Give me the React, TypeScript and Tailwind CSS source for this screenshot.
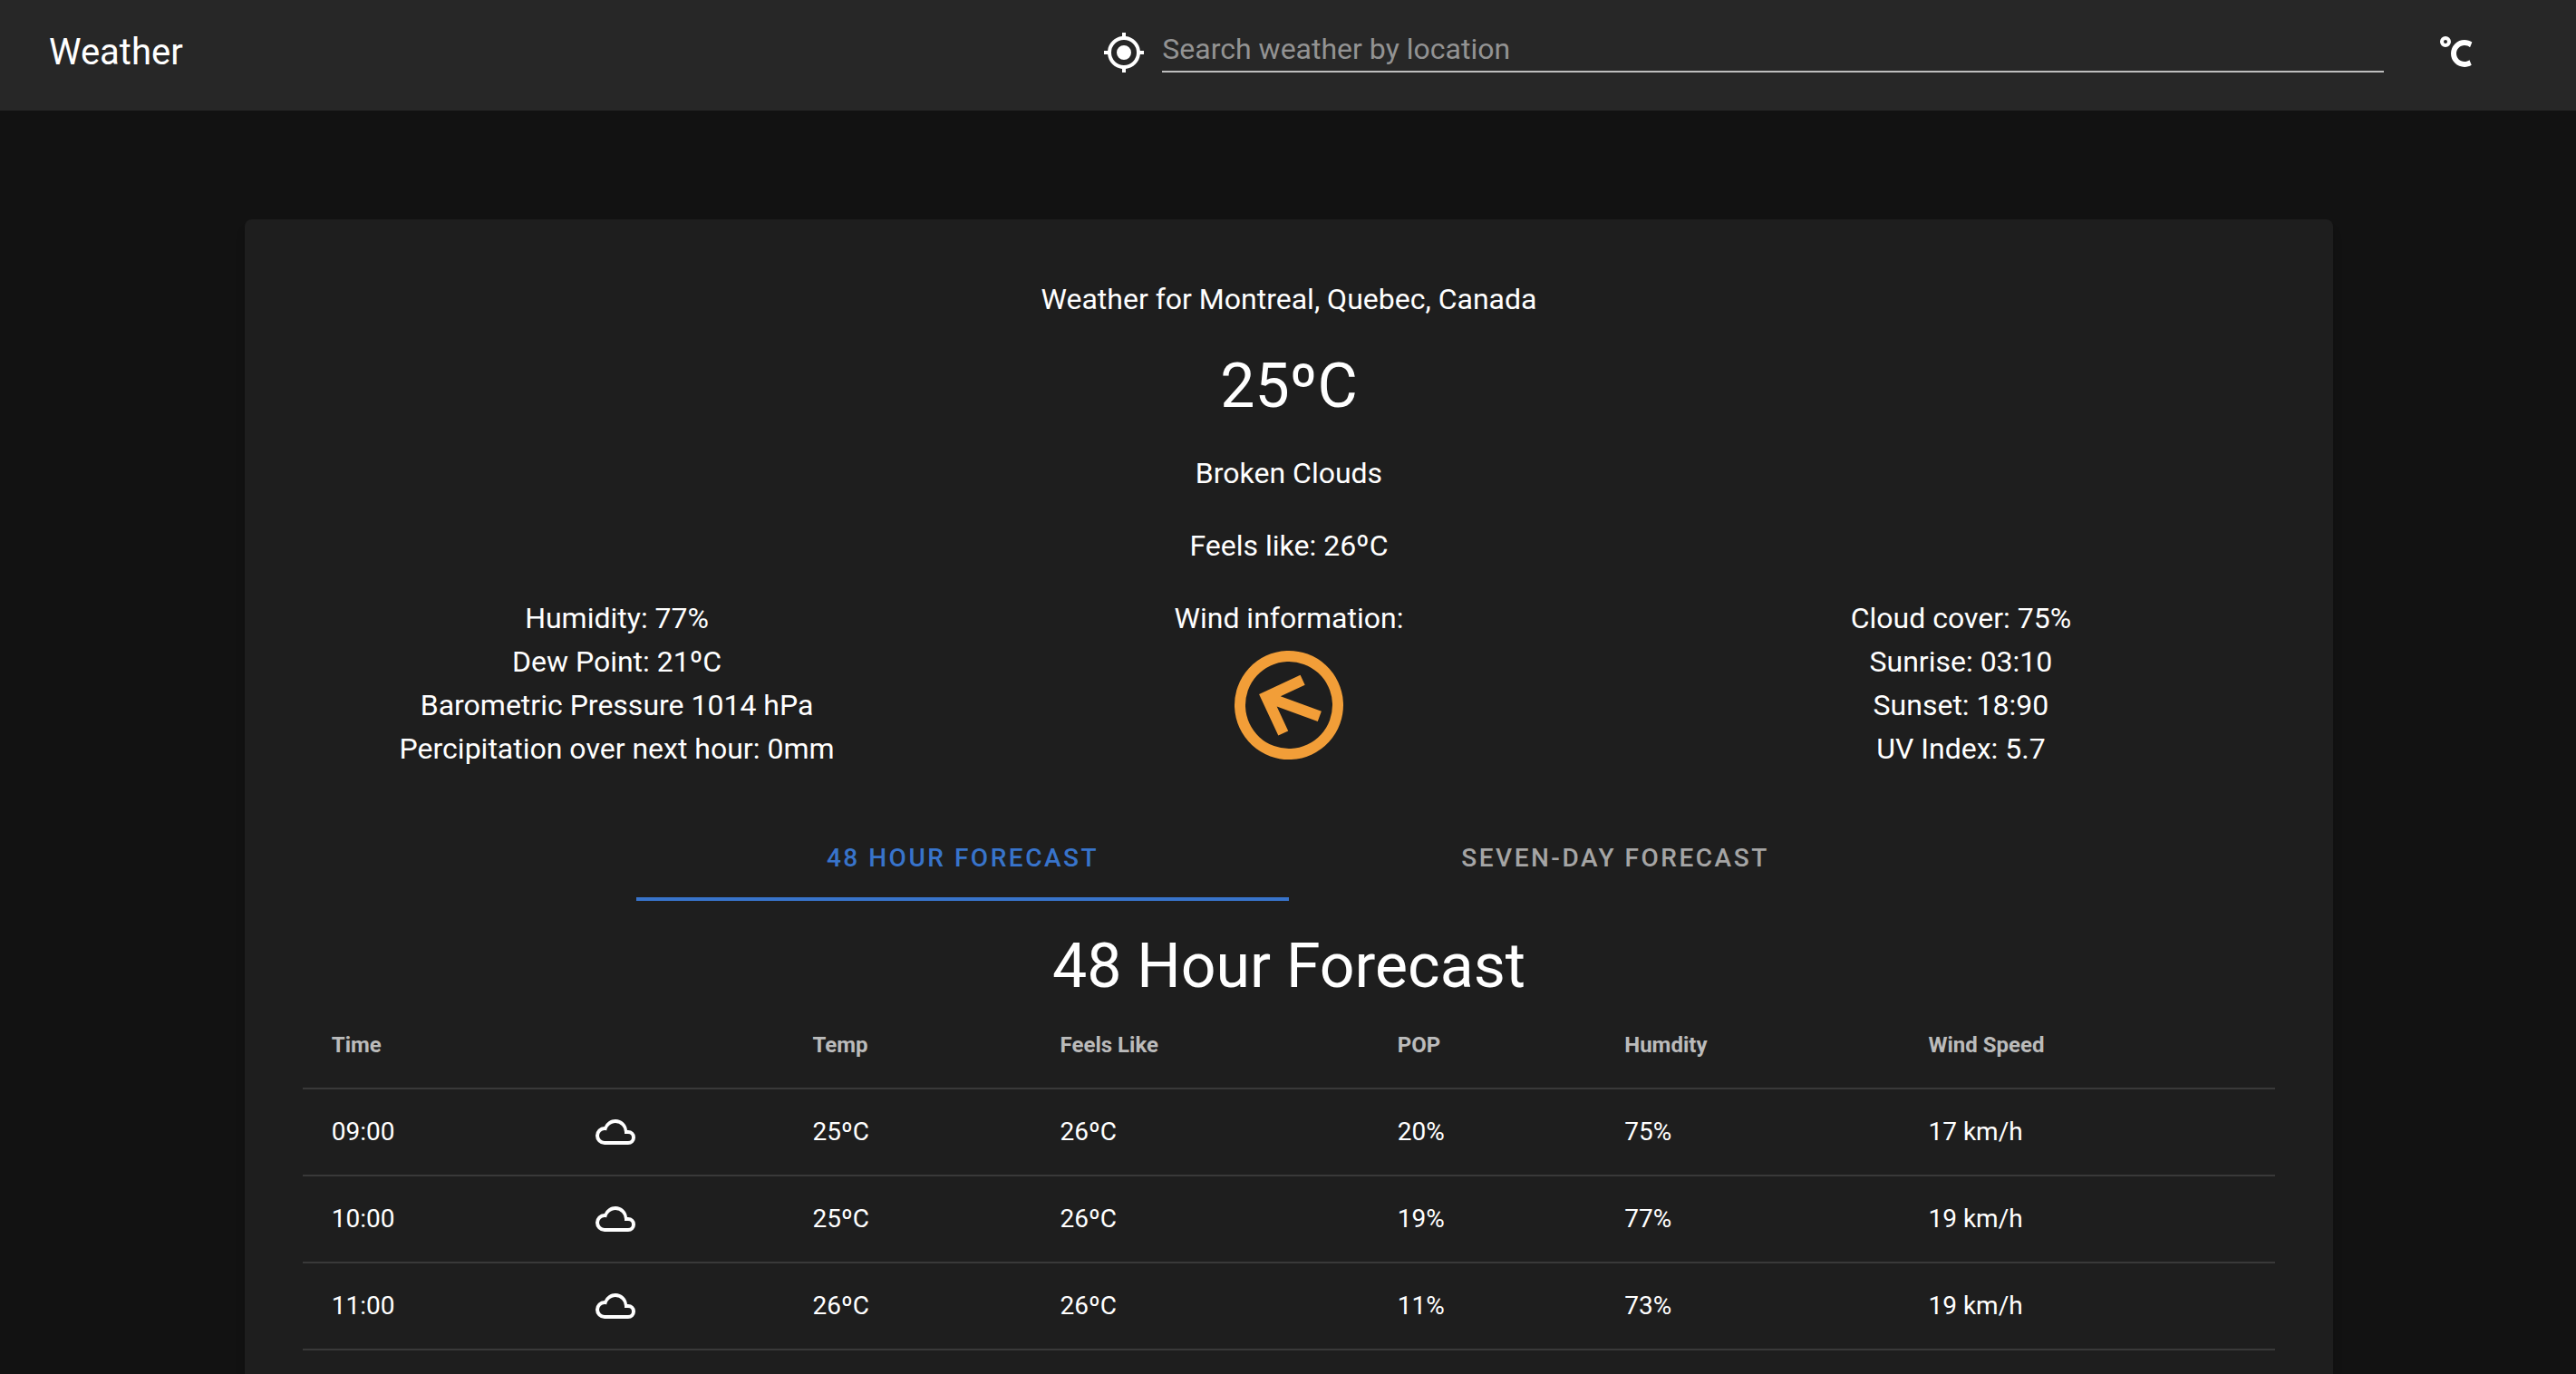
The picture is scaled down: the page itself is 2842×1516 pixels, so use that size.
import { useState } from "react";

const icons = {
  crosshairs:
    "M12,8A4,4 0 0,1 16,12A4,4 0 0,1 12,16A4,4 0 0,1 8,12A4,4 0 0,1 12,8M3.05,13H1V11H3.05C3.5,6.83 6.83,3.5 11,3.05V1H13V3.05C17.17,3.5 20.5,6.83 20.95,11H23V13H20.95C20.5,17.17 17.17,20.5 13,20.95V23H11V20.95C6.83,20.5 3.5,17.17 3.05,13M12,5A7,7 0 0,0 5,12A7,7 0 0,0 12,19A7,7 0 0,0 19,12A7,7 0 0,0 12,5Z",
  celsius:
    "M16.5,5C18.05,5 19.5,5.47 20.69,6.28L19.53,9.17C18.73,8.44 17.67,8 16.5,8C14,8 12,10 12,12.5C12,15 14,17 16.5,17C17.53,17 18.47,16.66 19.23,16.08L20.37,18.93C19.24,19.61 17.92,20 16.5,20A7.5,7.5 0 0,1 9,12.5A7.5,7.5 0 0,1 16.5,5M6,3A3,3 0 0,1 9,6A3,3 0 0,1 6,9A3,3 0 0,1 3,6A3,3 0 0,1 6,3M6,5A1,1 0 0,0 5,6A1,1 0 0,0 6,7A1,1 0 0,0 7,6A1,1 0 0,0 6,5Z",
  cloudy:
    "M6,19A5,5 0 0,1 1,14A5,5 0 0,1 6,9C7,6.65 9.3,5 12,5C15.43,5 18.24,7.66 18.5,11.03L19,11A4,4 0 0,1 23,15A4,4 0 0,1 19,19H6M19,13H17V12A5,5 0 0,0 12,7C9.5,7 7.45,8.82 7.06,11.19C6.73,11.07 6.37,11 6,11A3,3 0 0,0 3,14A3,3 0 0,0 6,17H19A2,2 0 0,0 21,15A2,2 0 0,0 19,13Z",
  arrowCircle:
    "M13,18V10L16.5,13.5L17.92,12.08L12,6.16L6.08,12.08L7.5,13.5L11,10V18H13M12,2A10,10 0 0,1 22,12A10,10 0 0,1 12,22A10,10 0 0,1 2,12A10,10 0 0,1 12,2M12,4A8,8 0 0,0 4,12A8,8 0 0,0 12,20A8,8 0 0,0 20,12A8,8 0 0,0 12,4Z",
};

function Icon({ path, className }: { path: string; className: string }) {
  return (
    <svg viewBox="0 0 24 24" fill="currentColor" aria-hidden="true" className={className}>
      <path d={path} />
    </svg>
  );
}

const leftFacts = [
  "Humidity: 77%",
  "Dew Point: 21ºC",
  "Barometric Pressure 1014 hPa",
  "Percipitation over next hour: 0mm",
];

const rightFacts = ["Cloud cover: 75%", "Sunrise: 03:10", "Sunset: 18:90", "UV Index: 5.7"];

const columns = ["Time", "", "Temp", "Feels Like", "POP", "Humdity", "Wind Speed"];

const hours = [
  { time: "09:00", temp: "25ºC", feels: "26ºC", pop: "20%", humidity: "75%", wind: "17 km/h" },
  { time: "10:00", temp: "25ºC", feels: "26ºC", pop: "19%", humidity: "77%", wind: "19 km/h" },
  { time: "11:00", temp: "26ºC", feels: "26ºC", pop: "11%", humidity: "73%", wind: "19 km/h" },
];

const tabs = ["48 Hour Forecast", "Seven-Day Forecast"];

function FactList({ items }: { items: string[] }) {
  return (
    <ul>
      {items.map((item) => (
        <li key={item}>{item}</li>
      ))}
    </ul>
  );
}

function TopBar() {
  return (
    <header className="flex items-center bg-[#272727] pt-7 pr-[84px] pb-[34px] pl-[54px]">
      <div className="flex-[37] text-[40px] leading-[60px]">Weather</div>
      <div className="mr-8 flex flex-[45] items-center">
        <button type="button" aria-label="Use my location" className="mr-[18px]">
          <Icon path={icons.crosshairs} className="size-12" />
        </button>
        <div className="flex-1 pt-0.5 pb-2">
          <input
            type="text"
            aria-label="Search weather by location"
            placeholder="Search weather by location"
            className="block h-[50px] w-full border-b-2 border-[#bebebe] bg-transparent text-[32px] leading-[48px] outline-none placeholder:text-[#939393]"
          />
        </div>
      </div>
      <button type="button" aria-label="Temperature unit: Celsius" className="px-6">
        <Icon path={icons.celsius} className="size-12" />
      </button>
    </header>
  );
}

function ForecastTable() {
  return (
    <table className="w-full border-separate border-spacing-0 text-left text-[28px]">
      <thead>
        <tr>
          {columns.map((name, i) => (
            <th
              key={i}
              scope="col"
              className="h-24 border-b-2 border-[#393939] px-8 text-2xl font-bold whitespace-nowrap text-[#bbbbbb]"
            >
              {name}
            </th>
          ))}
        </tr>
      </thead>
      <tbody>
        {hours.map((h) => (
          <tr key={h.time} className="*:h-24 *:border-b-2 *:border-[#393939] *:px-8 *:whitespace-nowrap">
            <td>{h.time}</td>
            <td>
              <Icon path={icons.cloudy} className="size-12" />
            </td>
            <td>{h.temp}</td>
            <td>{h.feels}</td>
            <td>{h.pop}</td>
            <td>{h.humidity}</td>
            <td>{h.wind}</td>
          </tr>
        ))}
      </tbody>
    </table>
  );
}

export default function App() {
  const [active, setActive] = useState(0);

  return (
    <div className="flex min-h-screen flex-col bg-[#121212] font-['Roboto',sans-serif] text-white">
      <TopBar />
      <main className="mx-auto flex w-10/12 flex-1 flex-col pt-30 pr-[31px] pl-[33px]">
        <section className="flex-1 rounded-t-lg bg-[#1e1e1e] px-16 pt-16 text-center text-[32px] leading-[48px] shadow-lg">
          <div className="flex flex-col gap-8">
            <p>Weather for Montreal, Quebec, Canada</p>
            <p className="text-[68px] leading-[80px]">25ºC</p>
            <p>Broken Clouds</p>
            <p>Feels like: 26ºC</p>
            <div className="-mx-6 grid grid-cols-3">
              <FactList items={leftFacts} />
              <div className="flex flex-col items-center">
                <p>Wind information:</p>
                <Icon path={icons.arrowCircle} className="size-36 rotate-[-70deg] text-[#f29e38]" />
              </div>
              <FactList items={rightFacts} />
            </div>
          </div>

          <div role="tablist" className="mx-auto mt-12 grid max-w-[1440px] grid-cols-2">
            {tabs.map((name, i) => (
              <button
                key={name}
                type="button"
                role="tab"
                aria-selected={active === i}
                onClick={() => setActive(i)}
                className="h-24 border-b-4 border-transparent pt-1.5 text-[28px] font-medium tracking-[0.09em] text-[#a5a5a5] uppercase aria-selected:border-[#3874cb] aria-selected:text-[#3874cb]"
              >
                {name}
              </button>
            ))}
          </div>

          <h2 className="mt-8 text-[68px] leading-[80px]">{tabs[active]}</h2>
          <ForecastTable />
        </section>
      </main>
    </div>
  );
}
